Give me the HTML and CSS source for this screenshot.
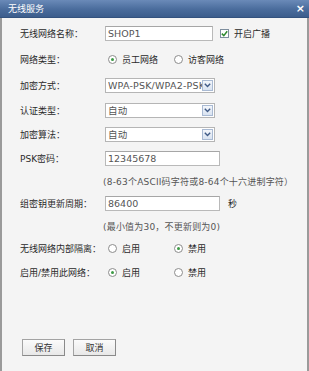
FILE: index.html
```html
<!DOCTYPE html>
<html lang="zh-CN">
<head>
<meta charset="utf-8">
<title>无线服务</title>
<link rel="stylesheet" href="styles.css">
</head>
<body>
<div class="dialog">
  <div class="titlebar">
    <span class="title">无线服务</span>
    <span class="close">×</span>
  </div>
  <div class="body">
    <div class="form">
      <div class="row h26">
        <span class="label">无线网络名称：</span>
        <div class="field w108">SHOP1</div>
        <span class="checkbox"><svg width="7" height="7" viewBox="0 0 7 7"><path d="M0.8 3.6 L2.8 5.6 L6.2 1.2" fill="none" stroke="#2f8a2f" stroke-width="1.5"/></svg></span>
        <span class="cbtext">开启广播</span>
      </div>
      <div class="row h26">
        <span class="label">网络类型：</span>
        <div class="radios">
          <span class="opt"><span class="radio on"></span>员工网络</span>
          <span class="opt"><span class="radio"></span>访客网络</span>
        </div>
      </div>
      <div class="row h26">
        <span class="label">加密方式：</span>
        <div class="select"><span class="sel-text">WPA-PSK/WPA2-PSK</span><span class="arrow"><svg width="7" height="5" viewBox="0 0 7 5"><path d="M0.8 0.8 L3.5 3.5 L6.2 0.8" fill="none" stroke="#3f5a86" stroke-width="1.4"/></svg></span></div>
      </div>
      <div class="row h24">
        <span class="label">认证类型：</span>
        <div class="select"><span class="sel-text">自动</span><span class="arrow"><svg width="7" height="5" viewBox="0 0 7 5"><path d="M0.8 0.8 L3.5 3.5 L6.2 0.8" fill="none" stroke="#3f5a86" stroke-width="1.4"/></svg></span></div>
      </div>
      <div class="row h24">
        <span class="label">加密算法：</span>
        <div class="select"><span class="sel-text">自动</span><span class="arrow"><svg width="7" height="5" viewBox="0 0 7 5"><path d="M0.8 0.8 L3.5 3.5 L6.2 0.8" fill="none" stroke="#3f5a86" stroke-width="1.4"/></svg></span></div>
      </div>
      <div class="row h24">
        <span class="label">PSK密码：</span>
        <div class="field w115">12345678</div>
      </div>
      <div class="hint">(8-63个ASCII码字符或8-64个十六进制字符）</div>
      <div class="row h23">
        <span class="label">组密钥更新周期：</span>
        <div class="field w115">86400</div>
        <span class="unit">秒</span>
      </div>
      <div class="hint">(最小值为30，不更新则为0)</div>
      <div class="row h23">
        <span class="label">无线网络内部隔离：</span>
        <div class="radios">
          <span class="opt"><span class="radio"></span>启用</span>
          <span class="opt"><span class="radio on"></span>禁用</span>
        </div>
      </div>
      <div class="row h24">
        <span class="label">启用/禁用此网络：</span>
        <div class="radios">
          <span class="opt"><span class="radio on"></span>启用</span>
          <span class="opt"><span class="radio"></span>禁用</span>
        </div>
      </div>
    </div>
    <div class="buttons">
      <span class="btn">保存</span>
      <span class="btn">取消</span>
    </div>
  </div>
</div>
</body>
</html>
```

FILE: styles.css
```css
html, body {
  margin: 0;
  padding: 0;
  background: #f4f4f4;
}
body {
  font-family: "DejaVu Sans", "Noto Sans CJK SC", sans-serif;
  font-size: 9px;
  color: #2a2a2a;
}
.dialog {
  width: 309px;
  height: 371px;
  display: flex;
  flex-direction: column;
  box-sizing: border-box;
}
.titlebar {
  height: 18px;
  flex: 0 0 18px;
  background: linear-gradient(#6a8ab8, #4a6c9c 55%, #3c5d8c);
  border-bottom: 1px solid #33527e;
  box-sizing: border-box;
  display: flex;
  align-items: center;
  justify-content: space-between;
  padding: 0 4px 0 8px;
  color: #fff;
}
.title {
  font-family: "Noto Sans CJK SC", sans-serif;
  font-size: 9px;
}
.close {
  font-family: "DejaVu Sans", sans-serif;
  font-weight: bold;
  font-size: 11px;
  line-height: 1;
}
.body {
  flex: 1;
  display: flex;
  flex-direction: column;
  border-left: 2px solid #9a9a9a;
  border-right: 2px solid #9a9a9a;
  background: #f4f4f4;
}
.form {
  padding: 2px 0 0 18px;
  display: flex;
  flex-direction: column;
}
.row {
  display: flex;
  align-items: center;
}
.h26 { height: 26px; }
.h24 { height: 24px; }
.h23 { height: 23px; }
.label {
  width: 85px;
  flex: 0 0 85px;
  white-space: nowrap;
}
.field {
  height: 15px;
  box-sizing: border-box;
  border: 1px solid #b9b9b9;
  border-top-color: #a6a6a6;
  background: #fff;
  color: #555;
  padding-left: 2px;
  font-size: 9.5px;
  display: flex;
  align-items: center;
}
.w108 { width: 108px; }
.w115 { width: 115px; }
.checkbox {
  width: 9px;
  height: 9px;
  box-sizing: border-box;
  border: 1px solid #7e8e9e;
  background: #fff;
  margin-left: 7px;
  display: flex;
  align-items: center;
  justify-content: center;
}
.cbtext {
  margin-left: 5px;
}
.unit {
  margin-left: 8px;
}
.radios {
  display: flex;
  margin-left: 3px;
}
.opt {
  width: 66px;
  display: flex;
  align-items: center;
  gap: 5px;
}
.radio {
  width: 9px;
  height: 9px;
  box-sizing: border-box;
  border: 1px solid #8c8c8c;
  border-radius: 50%;
  background: #fff;
  display: flex;
  align-items: center;
  justify-content: center;
}
.radio.on::after {
  content: "";
  width: 3px;
  height: 3px;
  border-radius: 50%;
  background: #3c9a45;
}
.select {
  width: 110px;
  height: 15px;
  box-sizing: border-box;
  border: 1px solid #b5b5b5;
  background: #fff;
  display: flex;
  align-items: center;
  padding-left: 2px;
  overflow: hidden;
}
.sel-text {
  flex: 1;
  overflow: hidden;
  white-space: nowrap;
  color: #555;
  font-size: 9.5px;
  letter-spacing: 0.2px;
}
.arrow {
  width: 11px;
  height: 11px;
  flex: 0 0 11px;
  box-sizing: border-box;
  margin-right: 1px;
  border: 1px solid #a9bad3;
  background: linear-gradient(#f3f6fb, #d9e3f1);
  display: flex;
  align-items: center;
  justify-content: center;
}
.hint {
  height: 22px;
  display: flex;
  align-items: center;
  padding-left: 83px;
  color: #555;
  white-space: nowrap;
  letter-spacing: 0.2px;
}
.buttons {
  margin-top: auto;
  padding: 0 0 15px 20px;
  display: flex;
  gap: 8px;
}
.btn {
  width: 43px;
  height: 17px;
  box-sizing: border-box;
  border: 1px solid #a3a3a3;
  border-right-color: #8a8a8a;
  border-bottom-color: #8a8a8a;
  background: linear-gradient(#fbfbfb, #e8e8e8);
  display: flex;
  align-items: center;
  justify-content: center;
  color: #333;
}
```
